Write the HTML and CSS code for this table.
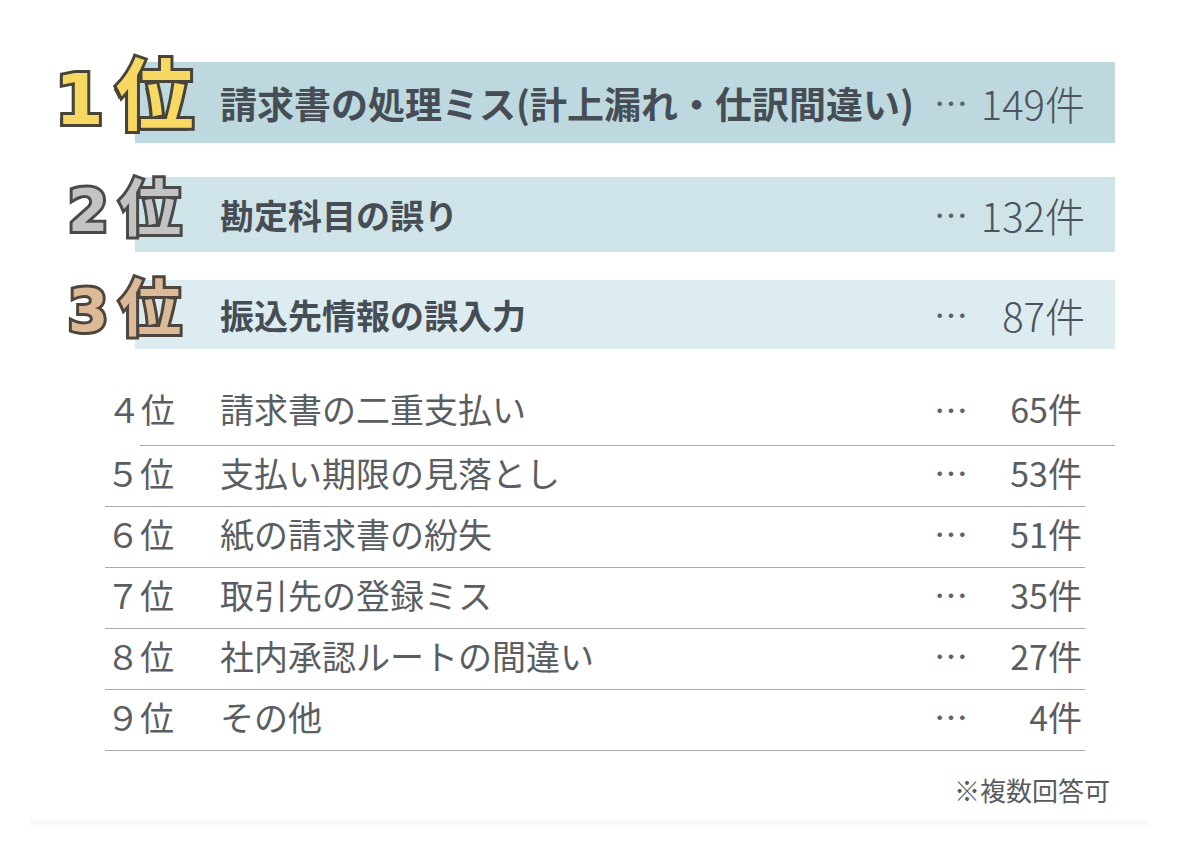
FILE: index.html
```html
<!DOCTYPE html>
<html lang="ja">
<head>
<meta charset="utf-8">
<title>ランキング</title>
<link rel="stylesheet" href="styles.css">
</head>
<body>
<main class="page">
  <section class="top">
    <div class="top-row top-row--1">
      <div class="bar">
        <span class="bar-label">請求書の処理ミス(計上漏れ・仕訳間違い)</span>
        <span class="dots">…</span>
        <span class="bar-num">149件</span>
      </div>
      <div class="rank rank--gold"><span class="rank-digit">1</span>位</div>
    </div>
    <div class="top-row top-row--2">
      <div class="bar">
        <span class="bar-label">勘定科目の誤り</span>
        <span class="dots">…</span>
        <span class="bar-num">132件</span>
      </div>
      <div class="rank rank--silver"><span class="rank-digit">2</span>位</div>
    </div>
    <div class="top-row top-row--3">
      <div class="bar">
        <span class="bar-label">振込先情報の誤入力</span>
        <span class="dots">…</span>
        <span class="bar-num">87件</span>
      </div>
      <div class="rank rank--bronze"><span class="rank-digit">3</span>位</div>
    </div>
  </section>

  <section class="list">
    <div class="row row--first"><span class="row-rank">４位</span><span class="row-label">請求書の二重支払い</span><span class="dots">…</span><span class="row-num">65件</span></div>
    <div class="row"><span class="row-rank">５位</span><span class="row-label">支払い期限の見落とし</span><span class="dots">…</span><span class="row-num">53件</span></div>
    <div class="row"><span class="row-rank">６位</span><span class="row-label">紙の請求書の紛失</span><span class="dots">…</span><span class="row-num">51件</span></div>
    <div class="row"><span class="row-rank">７位</span><span class="row-label">取引先の登録ミス</span><span class="dots">…</span><span class="row-num">35件</span></div>
    <div class="row"><span class="row-rank">８位</span><span class="row-label">社内承認ルートの間違い</span><span class="dots">…</span><span class="row-num">27件</span></div>
    <div class="row"><span class="row-rank">９位</span><span class="row-label">その他</span><span class="dots">…</span><span class="row-num">4件</span></div>
    <p class="note">※複数回答可</p>
  </section>
  <div class="fade-band"></div>
</main>
</body>
</html>
```

FILE: styles.css
```css
* { box-sizing: border-box; }

html, body {
  margin: 0;
  padding: 0;
  background: #ffffff;
}

body {
  font-family: "Noto Sans CJK JP", "Noto Sans", sans-serif;
  color: #555a5e;
}

.page {
  width: 1179px;
  height: 846px;
  padding-top: 62px;
  overflow: hidden;
}

/* ---------- top 3 ---------- */
.top {
  width: 1115px;
  display: flex;
  flex-direction: column;
}

.top-row {
  display: grid;
  grid-template-columns: 135px 1fr;
}

.top-row--2 { margin-top: 34px; }
.top-row--3 { margin-top: 28px; }

.bar {
  grid-column: 2;
  grid-row: 1;
  display: grid;
  grid-template-columns: 1fr 34px 117px;
  align-items: center;
  padding-left: 85px;
  padding-right: 30px;
}

.top-row--1 .bar { height: 81px; background: #bdd8de; }
.top-row--2 .bar { height: 75px; background: #cfe4e8; }
.top-row--3 .bar { height: 69px; background: #dcecf0; }

.bar-label {
  font-size: 34px;
  font-weight: 700;
  color: #464d54;
  white-space: nowrap;
}

.top-row--1 .bar-label { font-size: 37px; }

.bar-num {
  font-size: 40px;
  font-weight: 300;
  color: #4d545b;
  text-align: right;
  white-space: nowrap;
}

.dots {
  font-size: 34px;
  font-weight: 400;
  color: #5d6266;
  text-align: center;
  line-height: 1;
}

.rank {
  grid-column: 1 / 3;
  grid-row: 1;
  justify-self: start;
  align-self: start;
  z-index: 1;
  font-family: "Noto Sans CJK JP", sans-serif;
  font-weight: 700;
  line-height: 1;
  white-space: nowrap;
  -webkit-text-stroke: 6px #47443a;
  paint-order: stroke fill;
  text-shadow: -3px 3px 0 #47443a;
}

.rank-digit {
  font-family: "DejaVu Sans", sans-serif;
  font-weight: 700;
}

.rank--gold {
  font-size: 78px;
  color: #f7d862;
  margin-left: 55px;
  margin-top: -11px;
}
.rank--gold .rank-digit {
  font-size: 70px;
  margin-right: 12px;
}

.rank--silver {
  font-size: 62px;
  color: #c3c3c3;
  margin-left: 68px;
  margin-top: -4px;
  -webkit-text-stroke-color: #4a4a4a;
  text-shadow: -2px 2px 0 #4a4a4a;
}
.rank--bronze {
  font-size: 62px;
  color: #dcba98;
  margin-left: 68px;
  margin-top: -7px;
  -webkit-text-stroke-color: #4d463e;
  text-shadow: -2px 2px 0 #4d463e;
}
.rank--silver .rank-digit,
.rank--bronze .rank-digit {
  font-size: 58px;
  margin-right: 11px;
}

/* ---------- 4th and below ---------- */
.list {
  margin-top: 31px;
  margin-left: 105px;
  width: 980px;
  display: flex;
  flex-direction: column;
}

.row {
  display: grid;
  grid-template-columns: 114px 1fr 34px 114px;
  align-items: center;
  height: 61px;
  padding: 0 3px 6px 1px;
  border-bottom: 1.5px solid #a8a8a8;
  font-size: 34px;
  font-weight: 400;
  color: #5a5e62;
  line-height: 1.2;
}

.row--first {
  height: 66px;
  padding-top: 0;
  padding-bottom: 6px;
  margin-left: 35px;
  margin-right: -30px;
  padding-right: 33px;
  grid-template-columns: 79px 1fr 34px 114px;
}
.row--first .row-rank { margin-left: -34px; }

.row-rank, .row-label { white-space: nowrap; }

.row-num {
  text-align: right;
  white-space: nowrap;
}

.note {
  margin: 21px -25px 0 0;
  text-align: right;
  font-size: 26px;
  font-weight: 400;
  line-height: 36px;
  color: #585c60;
}

.fade-band {
  margin: 10px 30px 0 30px;
  height: 10px;
  background: linear-gradient(to bottom, #ffffff, #f7f7f7, #ffffff);
}
```
